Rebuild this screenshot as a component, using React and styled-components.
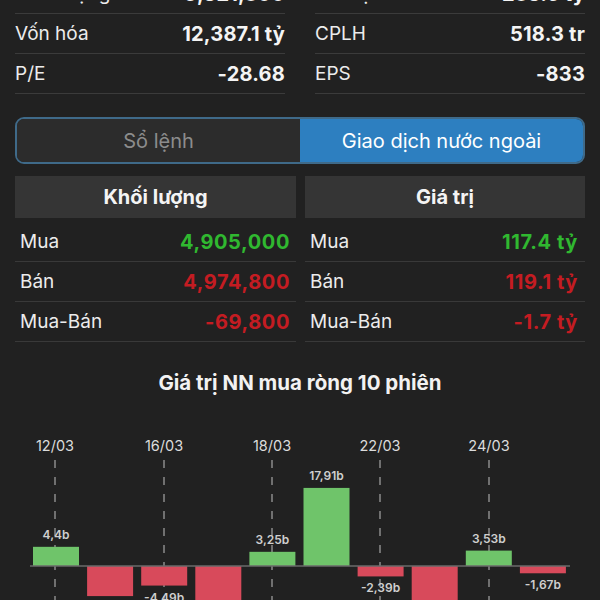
import React from "react";
import styled, { createGlobalStyle } from "styled-components";

const GlobalStyle = createGlobalStyle`
  *, *::before, *::after {
    box-sizing: border-box;
  }
  html, body {
    margin: 0;
    padding: 0;
    background: #212121;
  }
  body {
    font-family: Inter, "Liberation Sans", sans-serif;
    color: #f2f2f2;
  }
`;

const Page = styled.div`
  width: 600px;
  height: 600px;
  overflow: hidden;
  background: #212121;
`;

const StatsGrid = styled.div`
  display: grid;
  grid-template-columns: 1fr 1fr;
  column-gap: 30px;
  padding: 0 15px;
  margin-top: -26px;
`;

const StatsCol = styled.div`
  display: flex;
  flex-direction: column;
`;

const StatRow = styled.div`
  display: flex;
  align-items: center;
  justify-content: space-between;
  height: 40px;
  border-bottom: 1px solid #3b3b3b;
  font-size: 19px;
`;

const Label = styled.span`
  color: #ececec;
`;

const Value = styled.span`
  font-size: 20px;
  font-weight: 700;
  letter-spacing: 0.2px;
  color: #f4f4f4;
`;

const Segment = styled.div`
  display: flex;
  margin: 23px 15px 0;
  height: 47px;
  border-radius: 9px;
  overflow: hidden;
  border: 2px solid #3f6a89;
`;

const SegButton = styled.div`
  flex: 1;
  display: flex;
  align-items: center;
  justify-content: center;
  font-size: 20px;
  background: ${(p) => (p.active ? "#2d7fc0" : "#2c2c2c")};
  color: ${(p) => (p.active ? "#ffffff" : "#8c8c8c")};
`;

const ForeignGrid = styled.div`
  display: grid;
  grid-template-columns: 281px 280px;
  column-gap: 9px;
  padding: 0 15px;
  margin-top: 12px;
`;

const HeaderBox = styled.div`
  height: 42px;
  display: flex;
  align-items: center;
  justify-content: center;
  background: #353535;
  font-size: 20px;
  font-weight: 700;
  color: #f4f4f4;
  margin-bottom: 4px;
`;

const DataRow = styled.div`
  display: flex;
  align-items: center;
  justify-content: space-between;
  height: 40px;
  border-bottom: 1px solid #393939;
  font-size: 19px;
  padding: ${(p) => (p.right ? "0 7px 0 5px" : "0 6px 0 5px")};
`;

const Num = styled.span`
  font-size: 20px;
  font-weight: 700;
  letter-spacing: 0.6px;
  color: ${(p) => p.color};
`;

const ChartTitle = styled.div`
  margin-top: 30px;
  height: 22px;
  line-height: 22px;
  text-align: center;
  font-size: 20.5px;
  font-weight: 700;
  color: #f2f2f2;
`;

const ChartSvg = styled.svg`
  display: block;
  width: 600px;
  height: 206px;
`;

const GREEN = "#30b830";
const RED = "#c41c22";

const topLeft = [
  ["Khối lượng", "9,821,300"],
  ["Vốn hóa", "12,387.1 tỷ"],
  ["P/E", "-28.68"],
];
const topRight = [
  ["Giá trị GD", "235.6 tỷ"],
  ["CPLH", "518.3 tr"],
  ["EPS", "-833"],
];

const volume = [
  ["Mua", "4,905,000", GREEN],
  ["Bán", "4,974,800", RED],
  ["Mua-Bán", "-69,800", RED],
];
const value = [
  ["Mua", "117.4 tỷ", GREEN],
  ["Bán", "119.1 tỷ", RED],
  ["Mua-Bán", "-1.7 tỷ", RED],
];

const bars = [
  { v: 4.4, label: "4,4b" },
  { v: -6.9, label: "-6,9b" },
  { v: -4.49, label: "-4,49b" },
  { v: -9.2, label: "-9,2b" },
  { v: 3.25, label: "3,25b" },
  { v: 17.91, label: "17,91b" },
  { v: -2.39, label: "-2,39b" },
  { v: -8.6, label: "-8,6b" },
  { v: 3.53, label: "3,53b" },
  { v: -1.67, label: "-1,67b" },
];

const dates = [
  { x: 55, t: "12/03" },
  { x: 164, t: "16/03" },
  { x: 272, t: "18/03" },
  { x: 380, t: "22/03" },
  { x: 489, t: "24/03" },
];

const BASE = 566;
const SCALE = 4.36;
const FONT = "Inter, 'Liberation Sans', sans-serif";

function Chart() {
  return (
    <ChartSvg viewBox="0 394 600 206">
      {dates.map((d) => (
        <g key={d.t}>
          <text x={d.x} y={451} textAnchor="middle" fontSize="14.5" fill="#dcdcdc" fontFamily={FONT}>
            {d.t}
          </text>
          <line
            x1={d.x}
            x2={d.x}
            y1={460}
            y2={600}
            stroke="#8a8a8a"
            strokeWidth="1.5"
            strokeDasharray="8 9"
          />
        </g>
      ))}
      {bars.map((b, i) => {
        const x = 33 + i * 54.1;
        const h = Math.abs(b.v) * SCALE;
        const pos = b.v >= 0;
        const y = pos ? BASE - h : BASE;
        return (
          <g key={i}>
            <rect x={x} y={y} width={46} height={h} fill={pos ? "#6fc46a" : "#d84a5b"} />
            <text
              x={x + 23}
              y={pos ? y - 8 : y + h + 16}
              textAnchor="middle"
              fontSize="12"
              fontWeight="600"
              fill="#cfcfcf"
              fontFamily={FONT}
            >
              {b.label}
            </text>
          </g>
        );
      })}
      <line x1={30} x2={570} y1={BASE} y2={BASE} stroke="#6a6a6a" strokeWidth="1.5" />
    </ChartSvg>
  );
}

export default function App() {
  return (
    <Page>
      <GlobalStyle />
      <StatsGrid>
        <StatsCol>
          {topLeft.map(([l, v]) => (
            <StatRow key={l}>
              <Label>{l}</Label>
              <Value>{v}</Value>
            </StatRow>
          ))}
        </StatsCol>
        <StatsCol>
          {topRight.map(([l, v]) => (
            <StatRow key={l}>
              <Label>{l}</Label>
              <Value>{v}</Value>
            </StatRow>
          ))}
        </StatsCol>
      </StatsGrid>

      <Segment>
        <SegButton>Sổ lệnh</SegButton>
        <SegButton active>Giao dịch nước ngoài</SegButton>
      </Segment>

      <ForeignGrid>
        <div>
          <HeaderBox>Khối lượng</HeaderBox>
          {volume.map(([l, v, c]) => (
            <DataRow key={l}>
              <Label>{l}</Label>
              <Num color={c}>{v}</Num>
            </DataRow>
          ))}
        </div>
        <div>
          <HeaderBox>Giá trị</HeaderBox>
          {value.map(([l, v, c]) => (
            <DataRow key={l} right>
              <Label>{l}</Label>
              <Num color={c}>{v}</Num>
            </DataRow>
          ))}
        </div>
      </ForeignGrid>

      <ChartTitle>Giá trị NN mua ròng 10 phiên</ChartTitle>
      <Chart />
    </Page>
  );
}
